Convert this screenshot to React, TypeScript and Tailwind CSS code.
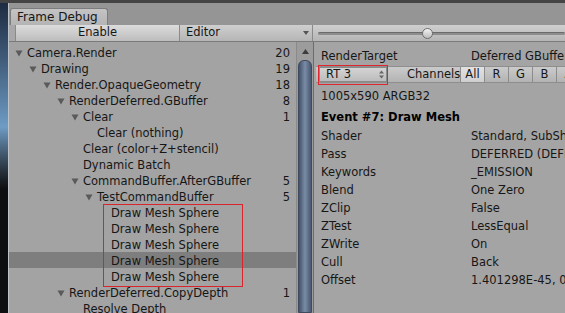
import { FC } from "react";

const font = { fontFamily: '"DejaVu Sans", "Liberation Sans", sans-serif' };

type Node = { label: string; level: number; count?: number; open?: boolean };

const rows: Node[] = [
  { label: "Camera.Render", level: 0, count: 20, open: true },
  { label: "Drawing", level: 1, count: 19, open: true },
  { label: "Render.OpaqueGeometry", level: 2, count: 18, open: true },
  { label: "RenderDeferred.GBuffer", level: 3, count: 8, open: true },
  { label: "Clear", level: 4, count: 1, open: true },
  { label: "Clear (nothing)", level: 5 },
  { label: "Clear (color+Z+stencil)", level: 4 },
  { label: "Dynamic Batch", level: 4 },
  { label: "CommandBuffer.AfterGBuffer", level: 4, count: 5, open: true },
  { label: "TestCommandBuffer", level: 5, count: 5, open: true },
  { label: "Draw Mesh Sphere", level: 6 },
  { label: "Draw Mesh Sphere", level: 6 },
  { label: "Draw Mesh Sphere", level: 6 },
  { label: "Draw Mesh Sphere", level: 6 },
  { label: "Draw Mesh Sphere", level: 6 },
  { label: "RenderDeferred.CopyDepth", level: 3, count: 1, open: true },
  { label: "Resolve Depth", level: 4 },
];

const props: [string, string][] = [
  ["Shader", "Standard, SubShader #0"],
  ["Pass", "DEFERRED (DEFERRED)"],
  ["Keywords", "_EMISSION"],
  ["Blend", "One Zero"],
  ["ZClip", "False"],
  ["ZTest", "LessEqual"],
  ["ZWrite", "On"],
  ["Cull", "Back"],
  ["Offset", "1.401298E-45, 0"],
];

const Triangle: FC = () => (
  <svg width="8" height="7" viewBox="0 0 8 7" className="shrink-0">
    <path d="M0.5 0.5 L7.5 0.5 L4 6.5 Z" fill="#5a5a5a" />
  </svg>
);

const TreeRow: FC<{ node: Node; selected: boolean }> = ({ node, selected }) => (
  <div className={`h-[16px] flex items-center pt-[4px] pr-[6px] ${selected ? "bg-[#7e7e7e]" : ""}`}>
    <div className="flex items-center shrink-0" style={{ width: 18 + node.level * 14 }}>
      <div className="ml-auto mr-[4px] w-[8px] -mt-[1px]">{node.open && <Triangle />}</div>
    </div>
    <span className="flex-1 whitespace-nowrap">{node.label}</span>
    {node.count !== undefined && <span>{node.count}</span>}
  </div>
);

const ChannelButton: FC<{ label: string; active?: boolean }> = ({ label, active }) => (
  <div
    className={`w-[24px] h-full flex items-center justify-center border-l border-[#8c8c8c] shrink-0 ${
      active ? "bg-gradient-to-b from-[#e2e2e2] to-[#cfcfcf]" : ""
    }`}
  >
    {label}
  </div>
);

export default function App() {
  return (
    <div
      className="w-[565px] h-[313px] overflow-hidden bg-[#3b3b3b] flex flex-col text-[11.5px] text-[#161616]"
      style={font}
    >
      <div className="h-[3px] shrink-0 bg-[#444444]" />
      <div className="flex flex-1 min-h-0">
        {/* desktop strip */}
        <div className="w-[8px] shrink-0 bg-gradient-to-b from-[#1e2c42] via-[#6e9cc4] via-40% to-[#0e0e10] to-60%" />
        <div className="w-[1px] shrink-0 bg-[#bfc3c8]" />

        {/* window */}
        <div className="flex-1 flex flex-col bg-[#a3a3a3] min-w-0">
          {/* tab bar */}
          <div className="h-[22px] shrink-0 bg-[#959595] flex items-end">
            <div className="ml-[1px] w-[98px] h-[17px] rounded-t-[3px] bg-gradient-to-b from-[#c4c4c4] to-[#b4b4b4] border border-b-0 border-[#7c7c7c] flex items-center pl-[6px] text-[12px]">
              Frame Debug
            </div>
          </div>

          {/* toolbar */}
          <div className="h-[17px] shrink-0 flex bg-gradient-to-b from-[#cfcfcf] to-[#b5b5b5] border-b border-[#7a7a7a]">
            <div className="w-[6px] shrink-0 bg-[#a8a8a8]" />
            <div className="w-[165px] shrink-0 flex items-center justify-center border-x border-[#8a8a8a] bg-gradient-to-b from-[#dcdcdc] to-[#bdbdbd]">
              Enable
            </div>
            <div className="w-[133px] shrink-0 flex items-center pl-[6px] pr-[3px] border-r border-[#8a8a8a]">
              <span className="flex-1">Editor</span>
              <svg width="6" height="4" viewBox="0 0 6 4">
                <path d="M0 0 L6 0 L3 4 Z" fill="#555" />
              </svg>
            </div>
            <div className="flex-1 flex items-center pl-[5px] relative">
              <div className="w-full h-[3px] rounded-full bg-[#8d8d8d] border-t border-[#6a6a6a]" />
              <div className="absolute left-[109px] top-[3px] w-[11px] h-[11px] rounded-full bg-gradient-to-b from-[#f2f2f2] to-[#bdbdbd] border border-[#6e6e6e]" />
            </div>
          </div>

          {/* content */}
          <div className="flex-1 flex min-h-0">
            {/* tree */}
            <div className="w-[287px] shrink-0 pt-[2px] relative">
              {rows.map((r, i) => (
                <TreeRow key={i} node={r} selected={i === 13} />
              ))}
              <div className="absolute left-[94px] top-[162px] w-[140px] h-[83px] border border-[#d8242a]" />
            </div>

            {/* scrollbar */}
            <div className="w-[17px] shrink-0 flex flex-col bg-[#9c9c9c] border-l border-[#8a8a8a]">
              <div className="h-[18px] shrink-0 flex items-center justify-center">
                <svg width="7" height="5" viewBox="0 0 7 5">
                  <path d="M0 5 L7 5 L3.5 0 Z" fill="#3c3c3c" />
                </svg>
              </div>
              <div className="flex-1 mx-[1px] rounded-t-[6px] bg-gradient-to-r from-[#44526a] via-[#7a8ca6] to-[#4a5872] border border-[#3e4a5e]" />
            </div>

            {/* details */}
            <div className="flex-1 flex flex-col min-w-0 border-l border-[#6c6c6c] bg-[#a4a4a4]">
              <div className="h-[16px] mt-[7px] flex items-center pl-[7px] whitespace-nowrap">
                <span className="w-[150px] shrink-0">RenderTarget</span>
                <span>Deferred GBuffer</span>
              </div>
              <div className="h-[17px] mt-[1px] ml-[2px] flex items-center bg-gradient-to-b from-[#cbcbcb] to-[#b3b3b3] border-y border-[#8e8e8e] whitespace-nowrap">
                <div className="ml-[2px] w-[70px] h-[20px] -my-[2px] border-[1.5px] border-[#e0262c] flex items-center shrink-0">
                  <div className="flex-1 h-[15px] flex items-center pl-[6px] pr-[2px] bg-gradient-to-b from-[#d4d4d4] to-[#bcbcbc] border border-[#8a8a8a]">
                    <span className="flex-1">RT 3</span>
                    <svg width="5" height="9" viewBox="0 0 5 9">
                      <path d="M0 3.5 L5 3.5 L2.5 0.5 Z M0 5.5 L5 5.5 L2.5 8.5 Z" fill="#666" />
                    </svg>
                  </div>
                </div>
                <div className="w-[1px] h-full bg-[#8a8a8a] ml-[3px]" />
                <span className="ml-[16px] w-[53px] shrink-0">Channels</span>
                <ChannelButton label="All" active />
                <ChannelButton label="R" />
                <ChannelButton label="G" />
                <ChannelButton label="B" />
                <ChannelButton label="A" />
              </div>
              <div className="h-[16px] mt-[6px] flex items-center pl-[7px]">1005x590 ARGB32</div>
              <div className="h-[16px] mt-[5px] flex items-center pl-[7px] font-bold text-black whitespace-nowrap">
                Event #7: Draw Mesh
              </div>
              <div className="mt-[2px] flex flex-col pl-[7px]">
                {props.map(([k, v]) => (
                  <div key={k} className="h-[18px] flex items-center whitespace-nowrap">
                    <span className="w-[150px] shrink-0">{k}</span>
                    <span>{v}</span>
                  </div>
                ))}
              </div>
            </div>
          </div>
        </div>
      </div>
    </div>
  );
}
